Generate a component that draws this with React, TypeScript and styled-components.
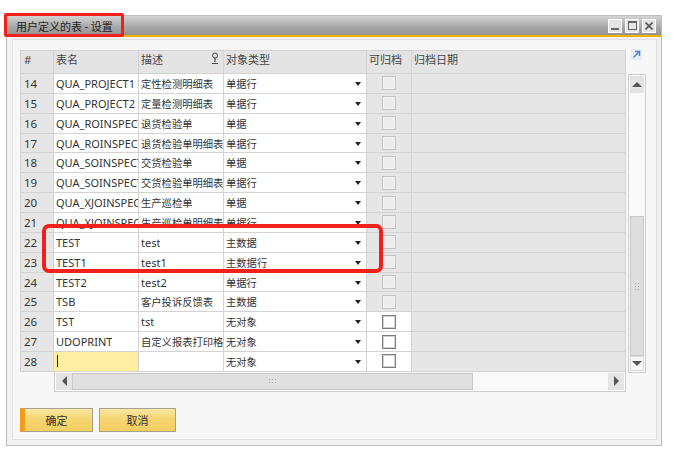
import React from 'react';
import styled, { createGlobalStyle, css } from 'styled-components';

type Tone = 'head' | 'gray' | 'white' | 'yellow';

type Row = {
  no: number;
  name: string;
  desc: string;
  type: string;
  archivable: boolean;
};

const rows: Row[] = [
  { no: 14, name: 'QUA_PROJECT1', desc: '定性检测明细表', type: '单据行', archivable: false },
  { no: 15, name: 'QUA_PROJECT2', desc: '定量检测明细表', type: '单据行', archivable: false },
  { no: 16, name: 'QUA_ROINSPECT', desc: '退货检验单', type: '单据', archivable: false },
  { no: 17, name: 'QUA_ROINSPECT', desc: '退货检验单明细表', type: '单据行', archivable: false },
  { no: 18, name: 'QUA_SOINSPECT', desc: '交货检验单', type: '单据', archivable: false },
  { no: 19, name: 'QUA_SOINSPECT', desc: '交货检验单明细表', type: '单据行', archivable: false },
  { no: 20, name: 'QUA_XJOINSPECT', desc: '生产巡检单', type: '单据', archivable: false },
  { no: 21, name: 'QUA_XJOINSPECT', desc: '生产巡检单明细表', type: '单据行', archivable: false },
  { no: 22, name: 'TEST', desc: 'test', type: '主数据', archivable: false },
  { no: 23, name: 'TEST1', desc: 'test1', type: '主数据行', archivable: false },
  { no: 24, name: 'TEST2', desc: 'test2', type: '单据行', archivable: false },
  { no: 25, name: 'TSB', desc: '客户投诉反馈表', type: '主数据', archivable: false },
  { no: 26, name: 'TST', desc: 'tst', type: '无对象', archivable: true },
  { no: 27, name: 'UDOPRINT', desc: '自定义报表打印格式', type: '无对象', archivable: true },
  { no: 28, name: '', desc: '', type: '无对象', archivable: true },
];

const isCjk = (text: string) => /[\u4e00-\u9fff]/.test(text);

const GlobalStyle = createGlobalStyle`
  body {
    margin: 0;
    background: #ffffff;
    font-family: "Noto Sans", "Noto Sans CJK SC", sans-serif;
    color: #333;
  }
`;

const Stage = styled.div`
  position: relative;
  padding: 15px 0 0 6px;
`;

const Window = styled.div`
  box-sizing: border-box;
  width: 656px;
  height: 431px;
  border: 1px solid #bdbdbd;
  background: #f2f2f2;
  display: flex;
  flex-direction: column;
`;

const TitleBar = styled.div`
  box-sizing: border-box;
  height: 21px;
  display: flex;
  align-items: center;
  justify-content: space-between;
  padding: 0 5px 0 9px;
  background: linear-gradient(#d4d4d4, #a9a9a9 55%, #939393);
  border-bottom: 2px solid #f2b000;
`;

const Title = styled.span`
  font-size: 11px;
  color: #1e1e1e;
  font-family: "Noto Sans CJK SC", sans-serif;
`;

const Controls = styled.div`
  display: flex;
  gap: 3px;
`;

const ControlButton = styled.div`
  box-sizing: border-box;
  width: 14px;
  height: 14px;
  border: 1px solid #ffffff;
  background: #e4e4e4;
  display: flex;
  align-items: center;
  justify-content: center;
`;

const Body = styled.div`
  flex: 1;
  padding: 2px 4px 5px 5px;
  display: flex;
`;

const Panel = styled.div`
  flex: 1;
  border: 1px solid #e0e0e0;
  background: #f7f7f7;
  padding: 10px 10px 6px 7px;
  display: flex;
  flex-direction: column;
`;

const GridArea = styled.div`
  display: flex;
  gap: 2px;
`;

const TableColumn = styled.div`
  display: flex;
  flex-direction: column;
`;

const Table = styled.div`
  display: grid;
  grid-template-columns: 33px 85px 85px 143px 45px 214px;
  grid-template-rows: 24px;
  grid-auto-rows: 19.86px;
  border-left: 1px solid #d3d3d3;
`;

const toneColors: Record<Tone, string> = {
  head: '#e4e4e4',
  gray: '#e6e6e6',
  white: '#ffffff',
  yellow: '#fdeea2',
};

const Cell = styled.div<{ $tone: Tone; $head?: boolean }>`
  box-sizing: border-box;
  border-right: 1px solid #d3d3d3;
  border-bottom: 1px solid #d3d3d3;
  background: ${({ $tone }) => toneColors[$tone]};
  padding: 0 0 0 2px;
  font-size: 11px;
  color: #333;
  white-space: nowrap;
  overflow: hidden;
  display: flex;
  align-items: center;
  justify-content: space-between;
  ${({ $head }) =>
    $head &&
    css`
      border-top: 1px solid #d3d3d3;
      align-items: flex-start;
      padding-top: 1px;
      line-height: 16px;
      color: #444;
    `}
`;

const NoCell = styled(Cell)`
  padding-left: 3px;
  font-size: 11.5px;
`;

const TypeCell = styled(Cell)`
  padding-right: 5px;
`;

const DescHeadCell = styled(Cell)`
  padding-right: 4px;
`;

const CellText = styled.span<{ $cjk?: boolean }>`
  overflow: hidden;
  font-size: ${({ $cjk }) => ($cjk ? '10.3px' : '11px')};
`;

const DropArrow = styled.span`
  flex: none;
  width: 0;
  height: 0;
  margin-top: 1px;
  border-left: 3px solid transparent;
  border-right: 3px solid transparent;
  border-top: 4px solid #222;
`;

const CheckCell = styled(Cell)`
  justify-content: center;
  padding: 0;
`;

const CheckBox = styled.span<{ $enabled: boolean }>`
  box-sizing: border-box;
  width: 14px;
  height: 14px;
  background: ${({ $enabled }) => ($enabled ? '#ffffff' : '#ececec')};
  border: 1px solid ${({ $enabled }) => ($enabled ? '#7e7e7e' : '#c3c3c3')};
  box-shadow: inset 0 0 0 1px ${({ $enabled }) => ($enabled ? '#d2d2d2' : '#f2f2f2')};
`;

const Caret = styled.span`
  width: 1px;
  height: 12px;
  background: #222;
  margin-left: 1px;
`;

const HScroll = styled.div`
  box-sizing: border-box;
  margin-left: 34px;
  width: 572px;
  height: 20px;
  border: 1px solid #cfcfcf;
  border-top: none;
  background: #f9f9f9;
  padding: 1px;
  display: flex;
`;

const ScrollButton = styled.div<{ $size: number }>`
  flex: none;
  width: ${({ $size }) => $size}px;
  background: #e4e4e4;
  display: flex;
  align-items: center;
  justify-content: center;
`;

const HThumb = styled.div`
  box-sizing: border-box;
  width: 401px;
  background: #e0e0e0;
  border: 1px solid #c9c9c9;
  display: flex;
  align-items: center;
  justify-content: center;
`;

const Spacer = styled.div`
  flex: 1;
`;

const SideColumn = styled.div`
  width: 18px;
  display: flex;
  flex-direction: column;
`;

const Corner = styled.div`
  height: 24px;
  display: flex;
  justify-content: center;
  align-items: flex-start;
`;

const ExpandIcon = styled.div`
  width: 11px;
  height: 11px;
  margin-top: -1px;
  margin-left: -1px;
  background: #e3ecf7;
  display: flex;
  align-items: center;
  justify-content: center;
`;

const VScroll = styled.div`
  box-sizing: border-box;
  height: 299px;
  border: 1px solid #cfcfcf;
  background: #f9f9f9;
  padding: 1px;
  display: flex;
  flex-direction: column;
`;

const VButton = styled.div<{ $size: number; $light?: boolean }>`
  box-sizing: border-box;
  flex: none;
  height: ${({ $size }) => $size}px;
  background: ${({ $light }) => ($light ? '#f6f6f6' : '#e3e3e3')};
  border: ${({ $light }) => ($light ? '1px solid #dcdcdc' : 'none')};
  display: flex;
  align-items: center;
  justify-content: center;
`;

const VTrack = styled.div`
  height: 123px;
`;

const VThumb = styled.div`
  box-sizing: border-box;
  height: 140px;
  background: #dedede;
  border: 1px solid #c9c9c9;
  display: flex;
  align-items: center;
  justify-content: center;
`;

const Footer = styled.div`
  margin-top: 16px;
  display: flex;
  gap: 6px;
`;

const ActionButton = styled.button<{ $primary?: boolean }>`
  box-sizing: border-box;
  width: ${({ $primary }) => ($primary ? 73 : 77)}px;
  height: 24px;
  padding: 0;
  border: 1px solid #a9a08c;
  background: linear-gradient(#fae6a4, #f5d571 45%, #f3cf62);
  font-family: "Noto Sans CJK SC", sans-serif;
  font-size: 11px;
  color: #333;
  ${({ $primary }) =>
    $primary &&
    css`
      border-left: 5px solid #f19d1a;
      padding-right: 4px;
    `}
`;

const Annotation = styled.div<{ $x: number; $y: number; $w: number; $h: number; $line: number; $radius: number }>`
  position: absolute;
  box-sizing: border-box;
  left: ${({ $x }) => $x}px;
  top: ${({ $y }) => $y}px;
  width: ${({ $w }) => $w}px;
  height: ${({ $h }) => $h}px;
  border: ${({ $line }) => $line}px solid #f0201a;
  border-radius: ${({ $radius }) => $radius}px;
  pointer-events: none;
`;

const Grip = ({ vertical }: { vertical?: boolean }) => (
  <svg width={vertical ? 5 : 7} height={vertical ? 7 : 5} viewBox={vertical ? '0 0 5 7' : '0 0 7 5'}>
    {(vertical
      ? [[0, 0], [3, 0], [0, 3], [3, 3], [0, 6], [3, 6]]
      : [[0, 0], [3, 0], [6, 0], [0, 3], [3, 3], [6, 3]]
    ).map(([x, y], i) => (
      <rect key={i} x={x} y={y} width={1} height={1} fill="#a8a8a8" />
    ))}
  </svg>
);

const Triangle = ({ dir }: { dir: 'up' | 'down' | 'left' | 'right' }) => {
  const points = {
    up: '0,5 5,0 10,5',
    down: '0,0 10,0 5,5',
    left: '5,0 5,10 0,5',
    right: '0,0 0,10 5,5',
  }[dir];
  const vertical = dir === 'up' || dir === 'down';
  return (
    <svg width={vertical ? 10 : 5} height={vertical ? 5 : 10}>
      <polygon points={points} fill="#555" />
    </svg>
  );
};

const FilterIcon = () => (
  <svg width="8" height="13" viewBox="0 0 8 13">
    <circle cx="4" cy="3.5" r="2.5" fill="none" stroke="#444" strokeWidth="1" />
    <path d="M4 6v4M1 11.5h6" stroke="#444" strokeWidth="1.2" fill="none" />
  </svg>
);

const Text = ({ value }: { value: string }) => <CellText $cjk={isCjk(value)}>{value}</CellText>;

const App = () => {
  return (
    <>
      <GlobalStyle />
      <Stage>
        <Window>
          <TitleBar>
            <Title>用户定义的表 - 设置</Title>
            <Controls>
              <ControlButton>
                <svg width="8" height="8">
                  <rect x="0" y="6" width="8" height="2" fill="#666" />
                </svg>
              </ControlButton>
              <ControlButton>
                <svg width="9" height="9">
                  <rect x="0.5" y="0.5" width="8" height="8" fill="none" stroke="#666" />
                  <rect x="0" y="0" width="9" height="2" fill="#666" />
                </svg>
              </ControlButton>
              <ControlButton>
                <svg width="8" height="8">
                  <path d="M0.5 0.5L7.5 7.5M7.5 0.5L0.5 7.5" stroke="#555" strokeWidth="1.6" />
                </svg>
              </ControlButton>
            </Controls>
          </TitleBar>
          <Body>
            <Panel>
              <GridArea>
                <TableColumn>
                  <Table>
                    <NoCell $tone="head" $head>#</NoCell>
                    <Cell $tone="head" $head>表名</Cell>
                    <DescHeadCell $tone="head" $head>
                      描述
                      <FilterIcon />
                    </DescHeadCell>
                    <Cell $tone="head" $head>对象类型</Cell>
                    <Cell $tone="head" $head>可归档</Cell>
                    <Cell $tone="head" $head>归档日期</Cell>
                    {rows.map((row) => (
                      <React.Fragment key={row.no}>
                        <NoCell $tone="gray">{row.no}</NoCell>
                        <Cell $tone={row.no === 28 ? 'yellow' : 'white'}>
                          {row.no === 28 ? <Caret /> : <Text value={row.name} />}
                        </Cell>
                        <Cell $tone="white">
                          <Text value={row.desc} />
                        </Cell>
                        <TypeCell $tone="white">
                          <Text value={row.type} />
                          <DropArrow />
                        </TypeCell>
                        <CheckCell $tone={row.archivable ? 'white' : 'gray'}>
                          <CheckBox $enabled={row.archivable} />
                        </CheckCell>
                        <Cell $tone="gray" />
                      </React.Fragment>
                    ))}
                  </Table>
                  <HScroll>
                    <ScrollButton $size={16}>
                      <Triangle dir="left" />
                    </ScrollButton>
                    <HThumb>
                      <Grip />
                    </HThumb>
                    <Spacer />
                    <ScrollButton $size={16}>
                      <Triangle dir="right" />
                    </ScrollButton>
                  </HScroll>
                </TableColumn>
                <SideColumn>
                  <Corner>
                    <ExpandIcon>
                      <svg width="9" height="9" viewBox="0 0 9 9">
                        <path d="M1.5 7.5L7 2M3 1.5h4.5V6" stroke="#4f86cc" strokeWidth="1.4" fill="none" />
                      </svg>
                    </ExpandIcon>
                  </Corner>
                  <VScroll>
                    <VButton $size={17}>
                      <Triangle dir="up" />
                    </VButton>
                    <VTrack />
                    <VThumb>
                      <Grip vertical />
                    </VThumb>
                    <VButton $size={15} $light>
                      <Triangle dir="down" />
                    </VButton>
                  </VScroll>
                </SideColumn>
              </GridArea>
              <Footer>
                <ActionButton $primary>确定</ActionButton>
                <ActionButton>取消</ActionButton>
              </Footer>
            </Panel>
          </Body>
        </Window>
        <Annotation $x={4} $y={13} $w={120} $h={24} $line={3} $radius={2} />
        <Annotation $x={42} $y={224} $w={341} $h={49} $line={4} $radius={7} />
      </Stage>
    </>
  );
};

export default App;
